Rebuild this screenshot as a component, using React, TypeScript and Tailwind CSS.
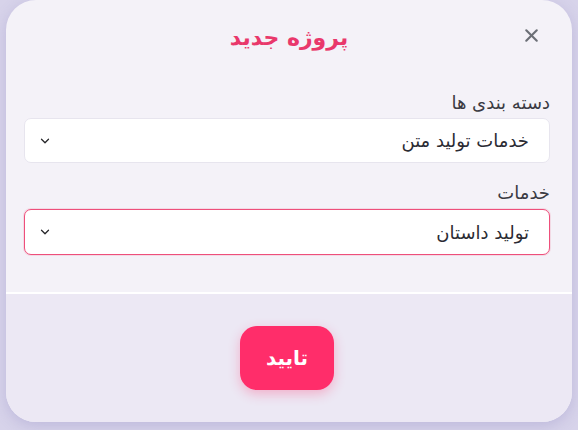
import { X, ChevronDown } from 'lucide-react';

const font = { fontFamily: '"DejaVu Sans", "Noto Sans", sans-serif' };

function SelectBox({ value, active }: { value: string; active?: boolean }) {
    return (
        <div
            className={
                active
                    ? 'flex items-center justify-between h-[46px] bg-white rounded-[7px] border border-[#ee4f7b] shadow-[0_0_0_1px_rgba(238,79,123,0.15)] pr-[20px] pl-[13px]'
                    : 'flex items-center justify-between h-[45px] bg-white rounded-[7px] border border-[#e7e5ee] pr-[20px] pl-[13px]'
            }
        >
            <span className="text-[18px] text-[#2b2b33]">{value}</span>
            <ChevronDown className="w-[14px] h-[14px] text-[#27272a]" strokeWidth={2.2} />
        </div>
    );
}

export default function App() {
    return (
        <div className="w-[578px] h-[430px] bg-[#d7d3ea] px-[6px] overflow-hidden" style={font}>
            <div dir="rtl" className="h-[422px] rounded-[30px] bg-[#f4f2f8] flex flex-col overflow-hidden shadow-[0_4px_14px_rgba(120,110,180,0.25)]">
                {/* Header */}
                <div className="relative h-[74px] flex items-center justify-center">
                    <h2 className="text-[22px] font-bold text-[#e9386b]">پروژه جدید</h2>
                    <button className="absolute right-[30px] top-[25px] text-[#6b6f76]">
                        <X className="w-[21px] h-[21px]" strokeWidth={2.4} />
                    </button>
                </div>

                {/* Body */}
                <div className="flex flex-col pr-[22px] pl-[18px] pt-[17px] pb-[37px]">
                    <label className="text-[18px] leading-[24px] text-[#3a3a42] mb-[3px]">دسته بندی ها</label>
                    <SelectBox value="خدمات تولید متن" />
                    <label className="text-[18px] leading-[24px] text-[#3a3a42] mt-[18px] mb-[4px]">خدمات</label>
                    <SelectBox value="تولید داستان" active />
                </div>

                <div className="h-[2px] bg-white" />

                {/* Footer */}
                <div className="flex-1 bg-[#ece8f4] flex items-center justify-center">
                    <button className="w-[94px] h-[64px] mr-[4px] rounded-[17px] bg-[#ff2d6a] text-white text-[20px] font-bold shadow-[0_4px_12px_rgba(255,45,106,0.3)]">
                        تایید
                    </button>
                </div>
            </div>
        </div>
    );
}
